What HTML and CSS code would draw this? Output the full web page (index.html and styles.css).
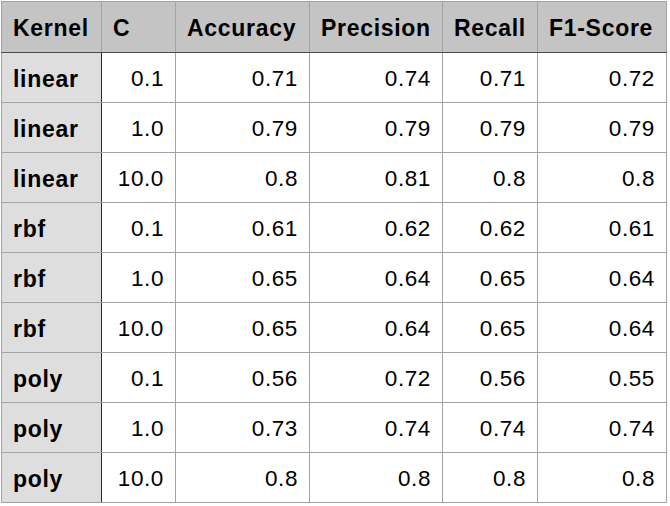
FILE: index.html
```html
<!DOCTYPE html>
<html>
<head>
<meta charset="utf-8">
<link rel="stylesheet" href="styles.css">
</head>
<body>
<table class="results">
  <colgroup>
    <col class="c-kernel">
    <col class="c-c">
    <col class="c-acc">
    <col class="c-prec">
    <col class="c-rec">
    <col class="c-f1">
  </colgroup>
  <thead>
    <tr>
      <th class="first">Kernel</th>
      <th>C</th>
      <th>Accuracy</th>
      <th>Precision</th>
      <th>Recall</th>
      <th>F1-Score</th>
    </tr>
  </thead>
  <tbody>
    <tr><th class="first">linear</th><td>0.1</td><td>0.71</td><td>0.74</td><td>0.71</td><td>0.72</td></tr>
    <tr><th class="first">linear</th><td>1.0</td><td>0.79</td><td>0.79</td><td>0.79</td><td>0.79</td></tr>
    <tr><th class="first">linear</th><td>10.0</td><td>0.8</td><td>0.81</td><td>0.8</td><td>0.8</td></tr>
    <tr><th class="first">rbf</th><td>0.1</td><td>0.61</td><td>0.62</td><td>0.62</td><td>0.61</td></tr>
    <tr><th class="first">rbf</th><td>1.0</td><td>0.65</td><td>0.64</td><td>0.65</td><td>0.64</td></tr>
    <tr><th class="first">rbf</th><td>10.0</td><td>0.65</td><td>0.64</td><td>0.65</td><td>0.64</td></tr>
    <tr><th class="first">poly</th><td>0.1</td><td>0.56</td><td>0.72</td><td>0.56</td><td>0.55</td></tr>
    <tr><th class="first">poly</th><td>1.0</td><td>0.73</td><td>0.74</td><td>0.74</td><td>0.74</td></tr>
    <tr><th class="first">poly</th><td>10.0</td><td>0.8</td><td>0.8</td><td>0.8</td><td>0.8</td></tr>
  </tbody>
</table>
</body>
</html>
```

FILE: styles.css
```css
html, body {
  margin: 0;
  padding: 0;
  background: #ffffff;
}
body {
  padding: 1px 0 0 1px;
  font-family: "Liberation Sans", Arial, Helvetica, sans-serif;
  color: #000;
}
.results {
  border-collapse: collapse;
  table-layout: fixed;
  width: 665px;
}
.c-kernel { width: 100px; }
.c-c { width: 74px; }
.c-acc { width: 134px; }
.c-prec { width: 133px; }
.c-rec { width: 95px; }
.c-f1 { width: 129px; }

.results th,
.results td {
  border: 1px solid #a3a3a3;
  padding: 3px 11px 0 11px;
  vertical-align: middle;
  white-space: nowrap;
  overflow: hidden;
}
.results thead th {
  background: #c4c4c4;
  height: 47px;
  font-weight: bold;
  font-size: 23px;
  letter-spacing: 0.7px;
  text-align: left;
  border-bottom: 1px solid #4a4a4a;
}
.results tbody th,
.results tbody td {
  height: 46px;
}
.results tbody th {
  background: #dedede;
  font-weight: bold;
  font-size: 23px;
  letter-spacing: 0.7px;
  text-align: left;
  border-right: 1px solid #2a2a2a;
}
.results tbody td {
  font-size: 22.5px;
  letter-spacing: 0.6px;
  text-align: right;
  padding-right: 11px;
}
```
